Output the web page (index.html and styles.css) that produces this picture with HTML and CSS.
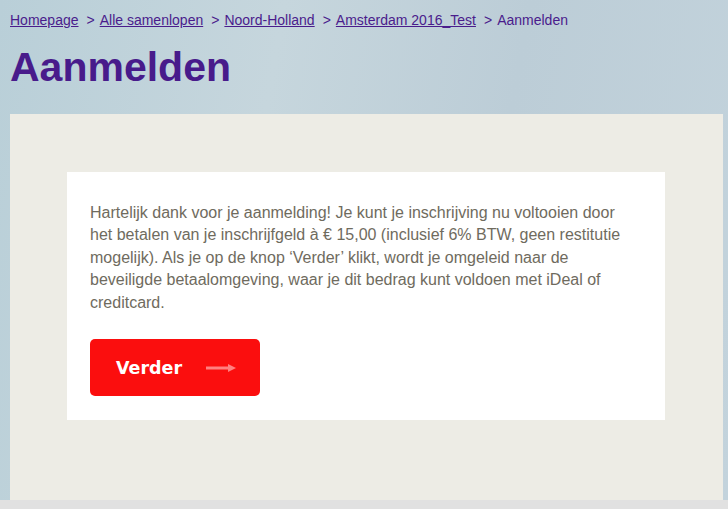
FILE: index.html
```html
<!DOCTYPE html>
<html lang="nl">
<head>
<meta charset="utf-8">
<title>Aanmelden</title>
<link rel="stylesheet" href="styles.css">
</head>
<body>
<div class="page">
  <nav class="crumbs">
    <a href="#">Homepage</a><span class="sep">&gt;</span><a href="#">Alle samenlopen</a><span class="sep">&gt;</span><a href="#">Noord-Holland</a><span class="sep">&gt;</span><a href="#">Amsterdam 2016_Test</a><span class="sep">&gt;</span><span class="current">Aanmelden</span>
  </nav>
  <h1 class="title">Aanmelden</h1>
  <section class="panel">
    <div class="card">
      <p class="intro">Hartelijk dank voor je aanmelding! Je kunt je inschrijving nu voltooien door het betalen van je inschrijfgeld à € 15,00 (inclusief 6% BTW, geen restitutie mogelijk). Als je op de knop ‘Verder’ klikt, wordt je omgeleid naar de beveiligde betaalomgeving, waar je dit bedrag kunt voldoen met iDeal of creditcard.</p>
      <a class="btn" href="#"><span class="btn-label">Verder</span><svg class="btn-arrow" width="30" height="10" viewBox="0 0 30 10"><line x1="0" y1="5" x2="24" y2="5" stroke="#ff8080" stroke-width="3"/><polygon points="22,1 30,5 22,9" fill="#ff8080"/></svg></a>
    </div>
  </section>
</div>
<div class="foot"></div>
</body>
</html>
```

FILE: styles.css
```css
html, body {
  margin: 0;
  padding: 0;
}
body {
  background: #e1e1e1;
  font-family: "Liberation Sans", Arial, sans-serif;
}
.page {
  background: linear-gradient(100deg, #b9cfd8 0%, #c6d6dd 35%, #bccdd7 65%, #c3d3dc 100%);
  padding: 10px 0 0 10px;
}
.crumbs {
  font-size: 14px;
  line-height: 20px;
  color: #4a1c8c;
  white-space: nowrap;
}
.crumbs a {
  color: #4a1c8c;
  text-decoration: underline;
}
.crumbs .sep {
  margin: 0 5px 0 8px;
}
.title {
  margin: 17px 0 26px;
  font-size: 41px;
  line-height: 41px;
  font-weight: bold;
  color: #481b8b;
}
.panel {
  width: 713px;
  box-sizing: border-box;
  background: #edece5;
  padding: 58px 58px 80px 57px;
}
.card {
  background: #ffffff;
  padding: 30px 23px 24px 23px;
}
.intro {
  margin: 0 0 25px;
  max-width: 540px;
  font-size: 16px;
  line-height: 22.4px;
  color: #6f6b5e;
}
.btn {
  display: flex;
  align-items: center;
  width: 170px;
  height: 57px;
  box-sizing: border-box;
  padding-left: 26px;
  background: #fb0e0e;
  border-radius: 5px;
  text-decoration: none;
}
.btn-label {
  font-family: "DejaVu Sans", Verdana, sans-serif;
  font-weight: bold;
  font-size: 17.5px;
  color: #ffffff;
}
.btn-arrow {
  margin-left: 24px;
}
.foot {
  height: 20px;
  background: #e1e1e1;
}
```
